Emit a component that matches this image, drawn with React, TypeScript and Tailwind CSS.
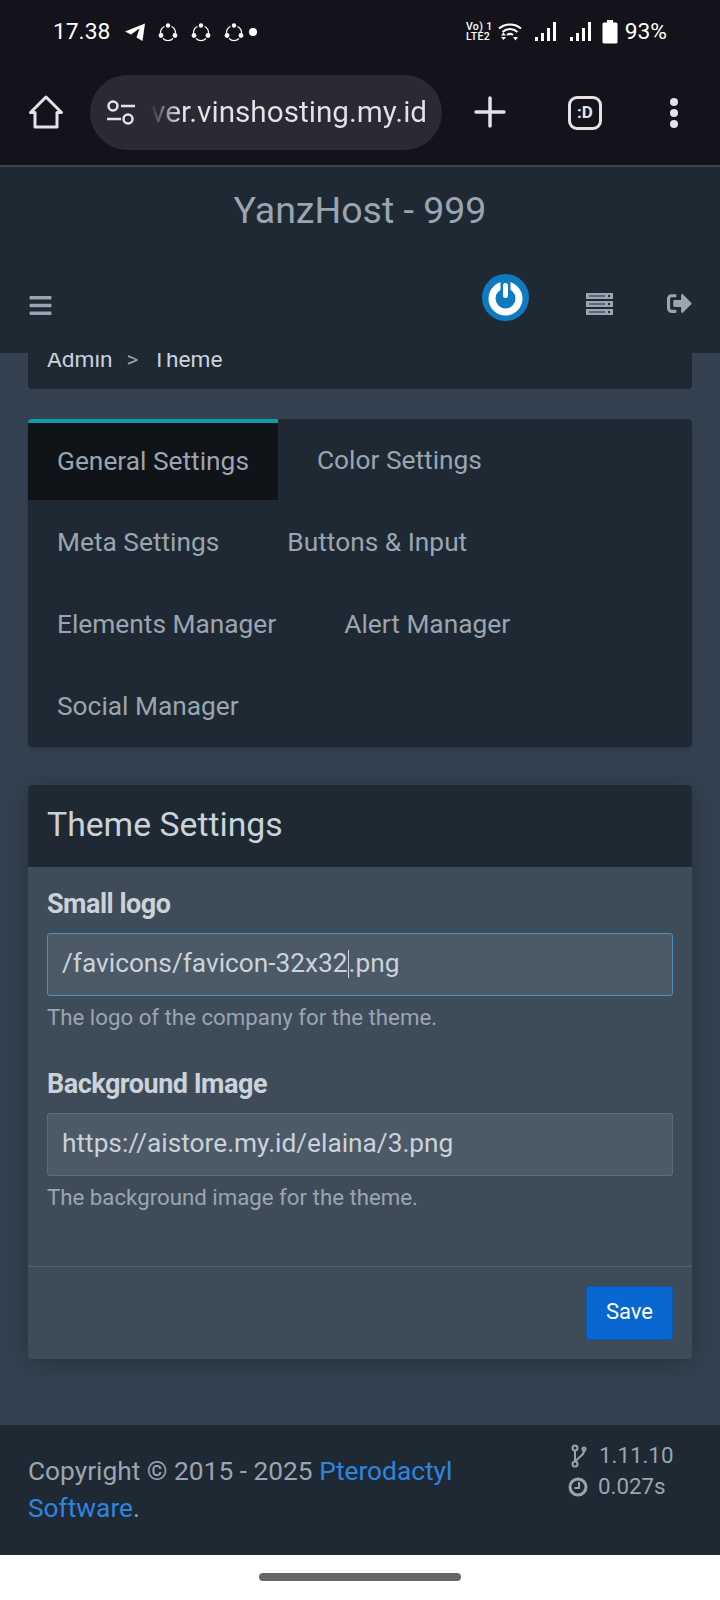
import { FaBars, FaSignOutAlt } from "react-icons/fa";

const TABS = [
  ["General Settings", "Color Settings"],
  ["Meta Settings", "Buttons & Input"],
  ["Elements Manager", "Alert Manager"],
  ["Social Manager"],
];

function TelegramIcon() {
  return (
    <svg width="22" height="20" viewBox="0 0 22 20" fill="white">
      <path d="M1 9.500 21 1.500 18.500 19 12.500 15.500 15.500 6.500 7 12.500Z" />
    </svg>
  );
}

function ShareIcon() {
  return (
    <svg width="20" height="20" viewBox="0 0 20 20" fill="none" stroke="white">
      <path d="M6.500 4.500A7 7 0 0 0 2.500 11M13.500 4.500a7 7 0 0 1 4 6.500M5 16.500a7 7 0 0 0 10 0" strokeWidth="1.200" />
      <circle cx="10" cy="3.500" r="2.200" fill="white" stroke="none" />
      <circle cx="3" cy="13.500" r="2.400" fill="white" stroke="none" />
      <circle cx="17" cy="13.500" r="2.400" fill="white" stroke="none" />
    </svg>
  );
}

function WifiIcon() {
  return (
    <svg width="24" height="20" viewBox="0 0 24 20" fill="none" stroke="white" strokeWidth="2">
      <path d="M1 6.500C7 1 17 1 23 6.500M4.500 10C9 6 15 6 19.500 10M9 13c2-1.500 4-1.500 6 0" />
      <path d="M3 13.500h5l-2.500-3ZM3 15h5l-2.500 3ZM15 15h5l-2.500 3.500Z" fill="white" stroke="none" />
    </svg>
  );
}

function SignalIcon() {
  return (
    <svg width="22" height="20" viewBox="0 0 22 20" fill="white">
      <rect x="0" y="15" width="3" height="4" />
      <rect x="6" y="11" width="3" height="8" />
      <rect x="12" y="6" width="3" height="13" />
      <rect x="18" y="0" width="3" height="19" />
    </svg>
  );
}

function BatteryIcon() {
  return (
    <svg width="16" height="24" viewBox="0 0 16 24" fill="white">
      <path d="M5 0h6v2.500h3a1.500 1.500 0 0 1 1.500 1.500v18a1.500 1.500 0 0 1-1.500 1.500H2A1.500 1.500 0 0 1 .5 22V4A1.500 1.500 0 0 1 2 2.500h3Z" />
    </svg>
  );
}

function StatusBar() {
  return (
    <div className="flex h-[62px] items-end justify-between pb-[16px] pl-[53px] pr-[53px] text-white">
      <div className="flex items-center">
        <span className="text-[22.800px] leading-[28px]">17.38</span>
        <span className="ml-[14px] flex"><TelegramIcon /></span>
        <span className="ml-[12px] flex"><ShareIcon /></span>
        <span className="ml-[13px] flex"><ShareIcon /></span>
        <span className="ml-[13px] flex"><ShareIcon /></span>
        <span className="ml-[5px] h-[8px] w-[8px] rounded-full bg-white" />
      </div>
      <div className="flex items-center">
        <div className="flex flex-col text-[10.500px] font-medium leading-[10px] tracking-[0.4px]">
          <span>Vo) 1</span>
          <span>LTE2</span>
        </div>
        <span className="ml-[5px] flex"><WifiIcon /></span>
        <span className="ml-[13px] flex"><SignalIcon /></span>
        <span className="ml-[13px] flex"><SignalIcon /></span>
        <span className="ml-[10px] flex"><BatteryIcon /></span>
        <span className="ml-[7px] text-[22.800px] leading-[28px]">93%</span>
      </div>
    </div>
  );
}

function BrowserBar() {
  return (
    <div className="flex h-[105px] items-start border-b-2 border-[#3f4149] pt-[13px] text-[#e6e1e6]">
      <svg className="ml-[28px] mt-[19px]" width="36" height="36" viewBox="0 0 36 36" fill="none" stroke="currentColor" strokeWidth="3" strokeLinejoin="round">
        <path d="M2.500 18.500 18 3l15.500 15.500H29V33H7V18.500Z" />
      </svg>
      <div className="ml-[26px] flex h-[75px] w-[352px] items-center overflow-hidden rounded-full bg-[#2b2933] pl-[16px] pr-[15px]">
        <svg className="shrink-0" width="30" height="28" viewBox="0 0 30 28" fill="none" stroke="currentColor" strokeWidth="2.500">
          <circle cx="7" cy="7" r="4.500" />
          <circle cx="22" cy="20" r="4.500" />
          <path d="M15 7h14M1 20h14" />
        </svg>
        <span className="ml-[14px] whitespace-nowrap bg-[linear-gradient(90deg,#2b2933,#e6e1e6_30px)] bg-clip-text pl-[1px] text-[29.700px] text-transparent">ver.vinshosting.my.id</span>
      </div>
      <svg className="ml-[32px] mt-[21px]" width="32" height="32" viewBox="0 0 32 32" fill="none" stroke="currentColor" strokeWidth="3.500" strokeLinecap="round">
        <path d="M16 2v28M2 16h28" />
      </svg>
      <div className="ml-[62px] mt-[21px] flex h-[34px] w-[34px] items-center justify-center rounded-[9px] border-[3px] border-[#e6e1e6] text-[17px] font-bold">:D</div>
      <div className="ml-[68px] mt-[23px] flex flex-col gap-[3px]">
        <span className="h-[8px] w-[8px] rounded-full bg-[#e6e1e6]" />
        <span className="h-[8px] w-[8px] rounded-full bg-[#e6e1e6]" />
        <span className="h-[8px] w-[8px] rounded-full bg-[#e6e1e6]" />
      </div>
    </div>
  );
}

function PowerLogo() {
  return (
    <svg width="47" height="47" viewBox="0 0 47 47">
      <circle cx="23.500" cy="23.500" r="23.500" fill="#0f7abf" />
      <circle cx="23.500" cy="24.500" r="13.500" fill="none" stroke="white" strokeWidth="7" />
      <rect x="18.500" y="6" width="10" height="17" fill="#0f7abf" />
      <rect x="21" y="9" width="5" height="15" rx="2.500" fill="white" />
    </svg>
  );
}

function ServerIcon() {
  return (
    <svg width="27" height="22" viewBox="0 0 27 22" fill="#9aa5b1">
      <path fillRule="evenodd" d="M0 0h27v6H0ZM3 2.500v1h16v-1ZM22 2v2h2V2ZM0 8h27v6H0ZM3 10.500v1h16v-1ZM22 10v2h2v-2ZM0 16h27v6H0ZM3 18.500v1h16v-1ZM22 18v2h2v-2Z" />
    </svg>
  );
}

function ClockIcon() {
  return (
    <svg width="20" height="20" viewBox="0 0 20 20" fill="none" stroke="currentColor">
      <circle cx="10" cy="10" r="8" strokeWidth="3" />
      <path d="M11 5v6H6.500" strokeWidth="2" />
    </svg>
  );
}

function Navbar() {
  return (
    <div className="relative z-10 flex h-[186px] flex-col bg-[#1f2933] text-[#9aa5b1]">
      <div className="pt-[20px] text-center text-[37.500px] leading-[46px]">YanzHost - 999</div>
      <div className="flex items-start pl-[28px] pr-[28px] pt-[41px]">
        <FaBars className="mt-[19px] text-[25px]" />
        <span className="ml-auto flex"><PowerLogo /></span>
        <span className="ml-[57px] mt-[19px] flex"><ServerIcon /></span>
        <FaSignOutAlt className="ml-[54px] mt-[17px] text-[25px]" />
      </div>
    </div>
  );
}

function Field({ label, value, help, focused }: { label: string; value: React.ReactNode; help: string; focused?: boolean }) {
  return (
    <div>
      <div className="text-[27px] font-bold leading-[34px] tracking-[-0.5px] text-[#cbd2d9]">{label}</div>
      <div
        className={
          "mt-[12px] flex h-[63px] items-center rounded-[3px] border bg-[#4c5a68] px-[14px] pb-[2px] text-[26.250px] text-[#cbd2d9] " +
          (focused ? "border-[#4f8fbd]" : "border-[#5f6c79]")
        }
      >
        {value}
      </div>
      <div className="mt-[7px] text-[22.250px] leading-[28px] text-[#9aa5b1]">{help}</div>
    </div>
  );
}

export default function App() {
  return (
    <div className="h-[1600px] w-[720px] overflow-hidden bg-white font-['Roboto',sans-serif]">
      <div className="bg-[#14121a]">
        <StatusBar />
        <BrowserBar />
      </div>
      <Navbar />
      <div className="h-[1074px] bg-[#334150] px-[28px]">
        <div className="-mt-[2px] h-[38px] rounded-b-[4px] bg-[#1f2933] px-[19px] text-[22.700px] leading-[18px] text-[#cbd2d9]">
          <span>Admin</span>
          <span className="mx-[14px] text-[#9aa5b1]">&gt;</span>
          <span>Theme</span>
        </div>

        <div className="mt-[30px] h-[328px] rounded-[4px] bg-[#1f2933] shadow-md">
          {TABS.map((row, i) => (
            <div key={i} className="flex h-[82px] text-[26.300px] text-[#9aa5b1]">
              {row.map((tab, j) =>
                i === 0 && j === 0 ? (
                  <div key={tab} className="flex h-[81px] items-center rounded-tl-[4px] border-t-4 border-[#0f9ba8] bg-[#101318] pl-[29px] pr-[29px]">
                    {tab}
                  </div>
                ) : (
                  <div key={tab} className="flex h-[82px] items-center pl-[29px] pr-[29px] pt-[2px] [&:nth-child(2)]:ml-[10px]">
                    {tab}
                  </div>
                ),
              )}
            </div>
          ))}
        </div>

        <div className="mt-[38px] overflow-hidden rounded-[4px] bg-[#3e4c59] shadow-[0_4px_24px_rgba(0,0,0,0.25)]">
          <div className="flex h-[82px] items-center bg-[#1f2933] px-[19px] pb-[2px] text-[33.750px] text-[#cbd2d9]">Theme Settings</div>
          <div className="flex h-[399px] flex-col gap-[36px] px-[19px] pt-[20px]">
            <Field
              label="Small logo"
              focused
              help="The logo of the company for the theme."
              value={
                <>
                  <span>/favicons/favicon-32x32</span>
                  <span className="h-[28px] w-px bg-[#cbd2d9]" />
                  <span>.png</span>
                </>
              }
            />
            <Field label="Background Image" value="https://aistore.my.id/elaina/3.png" help="The background image for the theme." />
          </div>
          <div className="flex h-[93px] items-start justify-end border-t border-[#52606d] px-[19px] pt-[19px]">
            <button className="h-[54px] w-[87px] rounded-[3px] border border-[#0b57b0] bg-[#0967d2] pb-[3px] text-[22px] text-white">Save</button>
          </div>
        </div>
      </div>

      <div className="flex h-[130px] justify-between bg-[#1f2933] pl-[28px] pr-[30px]">
        <div className="pt-[28px] text-[26.300px] leading-[37px] text-[#9aa5b1]">
          <div>
            Copyright © 2015 - 2025 <span className="text-[#2d85e0]">Pterodactyl</span>
          </div>
          <div>
            <span className="text-[#2d85e0]">Software</span>.
          </div>
        </div>
        <div className="w-[122px] pt-[15px] text-[22.300px] leading-[31px] text-[#9aa5b1]">
          <div className="flex items-center gap-[12px]">
            <svg className="ml-[3px]" width="16" height="24" viewBox="0 0 16 24" fill="none" stroke="currentColor" strokeWidth="2">
              <circle cx="4" cy="4" r="2.500" />
              <circle cx="4" cy="20" r="2.500" />
              <circle cx="13" cy="5" r="1.500" />
              <path d="M4 7v10M13 7c0 5-5 5-8 10" />
            </svg>
            <span>1.11.10</span>
          </div>
          <div className="flex items-center gap-[10px]">
            <ClockIcon />
            <span>0.027s</span>
          </div>
        </div>
      </div>

      <div className="flex h-[45px] items-start justify-center pt-[18px]">
        <div className="h-[8px] w-[202px] rounded-full bg-[#666666]" />
      </div>
    </div>
  );
}
